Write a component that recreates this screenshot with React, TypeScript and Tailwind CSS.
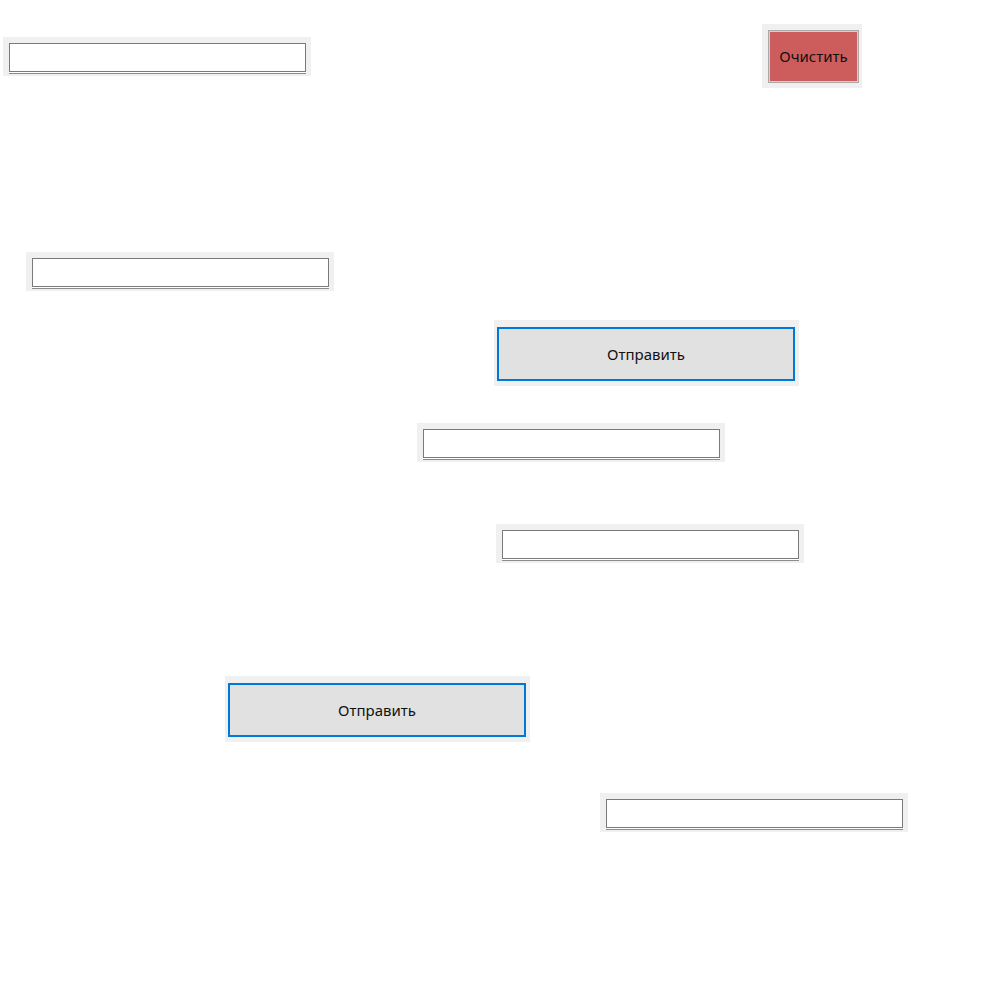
import React from "react";

type Pos = { x: number; y: number };

// form widgets dropped on a free canvas
const textBoxes: Pos[] = [
  { x: 3, y: 37 },
  { x: 26, y: 252 },
  { x: 417, y: 423 },
  { x: 496, y: 524 },
  { x: 600, y: 793 },
];

const sendButtons: Pos[] = [
  { x: 494, y: 320 },
  { x: 225, y: 676 },
];

function TextBox({ x, y }: Pos) {
  return (
    <div
      className="absolute w-[308px] h-[39px] bg-[#f0f0f0] pl-[6px] pt-[6px]"
      style={{ left: x, top: y }}
    >
      <input
        type="text"
        className="block w-[297px] h-[29px] bg-white border border-[#7a7a7a] shadow-[0_1px_0_#ffffff,0_2px_0_#8c8c8c] outline-none"
      />
    </div>
  );
}

function SendButton({ x, y }: Pos) {
  return (
    <div
      className="absolute w-[305px] h-[66px] bg-[#f0f0f0] pl-[3px] pt-[7px]"
      style={{ left: x, top: y }}
    >
      <button className="w-[298px] h-[54px] bg-[#e1e1e1] border-2 border-[#0078d7] text-[15px] text-[#111] font-['Noto_Sans',sans-serif]">
        Отправить
      </button>
    </div>
  );
}

export default function App() {
  return (
    <div className="relative w-[1000px] h-[1000px] bg-white overflow-hidden font-['Noto_Sans',sans-serif]">
      {textBoxes.map((p, i) => (
        <TextBox key={i} {...p} />
      ))}

      <div className="absolute left-[762px] top-[24px] w-[100px] h-[64px] bg-[#f0f0f0] pl-[6px] pt-[6px]">
        <button className="w-[91px] h-[53px] bg-[#cd5c5c] border border-[#a9a9a9] shadow-[inset_0_0_0_1px_#e8c8c8] text-[15px] text-[#111]">
          Очистить
        </button>
      </div>

      {sendButtons.map((p, i) => (
        <SendButton key={i} {...p} />
      ))}
    </div>
  );
}
